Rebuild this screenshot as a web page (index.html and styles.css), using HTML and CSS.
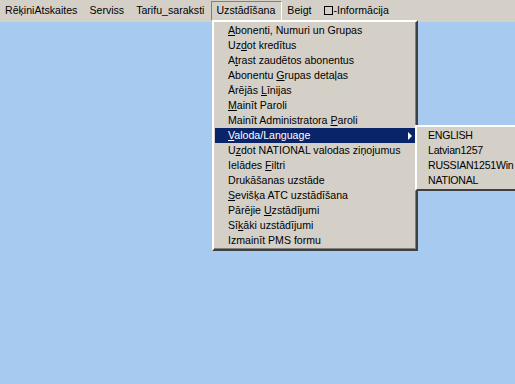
FILE: index.html
```html
<!DOCTYPE html>
<html>

<head>
    <title>Uzstādīšana</title>
    <link rel="stylesheet" href="styles.css">
</head>

<body>

    <div id="menubar">
        <div class="topitem">RēķiniAtskaites</div>
        <div class="topitem">Serviss</div>
        <div class="topitem">Tarifu_saraksti</div>
        <div class="topitem open">Uzstādīšana</div>
        <div class="topitem">Beigt</div>
        <div class="topitem"><span class="box"></span>-Informācija</div>
    </div>

    <div id="dropdown">
        <div class="item"><u>A</u>bonenti, Numuri un Grupas</div>
        <div class="item">Uz<u>d</u>ot kredītus</div>
        <div class="item">A<u>t</u>rast zaudētos abonentus</div>
        <div class="item">Abonentu <u>G</u>rupas detaļas</div>
        <div class="item">Ārējās <u>L</u>īnijas</div>
        <div class="item"><u>M</u>ainīt Paroli</div>
        <div class="item">Mainīt Administratora <u>P</u>aroli</div>
        <div class="item active"><u>V</u>aloda/Language<span class="arrow"></span></div>
        <div class="item">U<u>z</u>dot NATIONAL valodas ziņojumus</div>
        <div class="item">Ielādes <u>F</u>iltri</div>
        <div class="item">Drukāšanas uzstāde</div>
        <div class="item"><u>S</u>evišķa ATC uzstādīšana</div>
        <div class="item">Pārējie <u>U</u>zstādījumi</div>
        <div class="item">Sī<u>k</u>āki uzstādījumi</div>
        <div class="item">Izmainīt PMS formu</div>

        <div id="submenu">
            <div class="item">ENGLISH</div>
            <div class="item">Latvian1257</div>
            <div class="item">RUSSIAN1251Win</div>
            <div class="item">NATIONAL</div>
        </div>
    </div>

</body>

</html>
```

FILE: styles.css
```css
body {
    margin: 0;
    width: 515px;
    height: 384px;
    overflow: hidden;
    background-color: #a6caf0;
    font-family: "Liberation Sans", Arial, sans-serif;
    font-size: 10.6px;
    color: black;
    position: relative;
}

#menubar {
    display: flex;
    height: 22px;
    align-items: center;
    background-color: #d4d0c8;
}

.topitem {
    padding: 2px 6px 3px 4px;
    border: 1px solid transparent;
    line-height: 13px;
}

.topitem.open {
    border-color: #808080 #ffffff #ffffff #808080;
}

.box {
    display: inline-block;
    width: 7px;
    height: 7px;
    border: 1px solid black;
    margin-right: 1px;
    vertical-align: -1px;
}

#dropdown {
    position: absolute;
    left: 212px;
    top: 20px;
    width: 200px;
    padding: 1px;
    background-color: #d4d0c8;
    border: 2px solid;
    border-color: #ffffff #404040 #404040 #ffffff;
    box-shadow: inset -1px -1px 0 #808080;
}

.item {
    position: relative;
    height: 15px;
    line-height: 15px;
    padding-left: 13px;
    white-space: nowrap;
}

.item.active {
    background-color: #0a246a;
    color: white;
}

.arrow {
    position: absolute;
    right: 3px;
    top: 4px;
    border-left: 4px solid white;
    border-top: 4px solid transparent;
    border-bottom: 4px solid transparent;
}

#submenu {
    position: absolute;
    left: 201px;
    top: 103px;
    width: 110px;
    padding: 1px;
    background-color: #d4d0c8;
    border: 2px solid;
    border-color: #ffffff #404040 #404040 #ffffff;
}

#submenu .item {
    padding-left: 10px;
    letter-spacing: -0.25px;
}
```
